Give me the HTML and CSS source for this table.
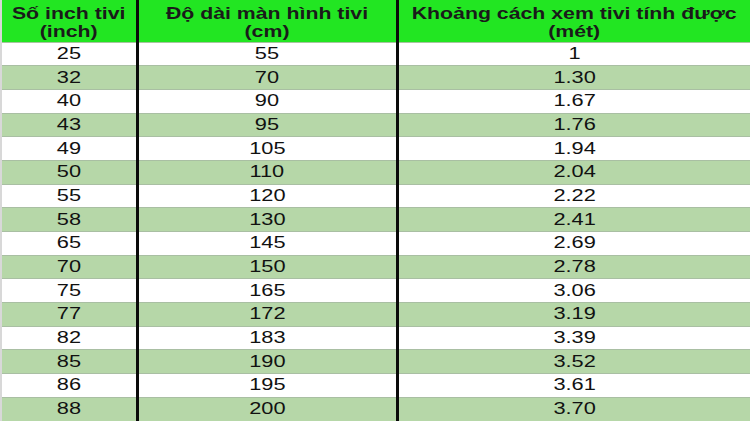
FILE: index.html
```html
<!DOCTYPE html>
<html lang="vi">
<head>
<meta charset="utf-8">
<link rel="stylesheet" href="styles.css">
</head>
<body>
<table class="tv">
<colgroup><col class="c1"><col class="c2"><col class="c3"></colgroup>
<thead>
<tr><th><span class="s">Số inch tivi<br>(inch)</span></th><th><span class="s">Độ dài màn hình tivi<br>(cm)</span></th><th><span class="s">Khoảng cách xem tivi tính được<br>(mét)</span></th></tr>
</thead>
<tbody>
<tr><td><span class="s">25</span></td><td><span class="s">55</span></td><td><span class="s">1</span></td></tr>
<tr class="g"><td><span class="s">32</span></td><td><span class="s">70</span></td><td><span class="s">1.30</span></td></tr>
<tr><td><span class="s">40</span></td><td><span class="s">90</span></td><td><span class="s">1.67</span></td></tr>
<tr class="g"><td><span class="s">43</span></td><td><span class="s">95</span></td><td><span class="s">1.76</span></td></tr>
<tr><td><span class="s">49</span></td><td><span class="s">105</span></td><td><span class="s">1.94</span></td></tr>
<tr class="g"><td><span class="s">50</span></td><td><span class="s">110</span></td><td><span class="s">2.04</span></td></tr>
<tr><td><span class="s">55</span></td><td><span class="s">120</span></td><td><span class="s">2.22</span></td></tr>
<tr class="g"><td><span class="s">58</span></td><td><span class="s">130</span></td><td><span class="s">2.41</span></td></tr>
<tr><td><span class="s">65</span></td><td><span class="s">145</span></td><td><span class="s">2.69</span></td></tr>
<tr class="g"><td><span class="s">70</span></td><td><span class="s">150</span></td><td><span class="s">2.78</span></td></tr>
<tr><td><span class="s">75</span></td><td><span class="s">165</span></td><td><span class="s">3.06</span></td></tr>
<tr class="g"><td><span class="s">77</span></td><td><span class="s">172</span></td><td><span class="s">3.19</span></td></tr>
<tr><td><span class="s">82</span></td><td><span class="s">183</span></td><td><span class="s">3.39</span></td></tr>
<tr class="g"><td><span class="s">85</span></td><td><span class="s">190</span></td><td><span class="s">3.52</span></td></tr>
<tr><td><span class="s">86</span></td><td><span class="s">195</span></td><td><span class="s">3.61</span></td></tr>
<tr class="g"><td><span class="s">88</span></td><td><span class="s">200</span></td><td><span class="s">3.70</span></td></tr>
</tbody>
</table>
</body>
</html>
```
FILE: styles.css
```css
html, body { margin: 0; padding: 0; background: #fff; }
body { width: 750px; height: 421px; overflow: hidden; }
.tv {
  width: 750px;
  border-collapse: collapse;
  table-layout: fixed;
  font-family: "Liberation Sans", Arial, sans-serif;
  color: #111;
  border-left: 2px solid #d8d8d8;
  border-right: 2px solid #d0d0d0;
}
.c1 { width: 136px; }
.c2 { width: 260px; }
.c3 { width: 354px; }
.s { display: inline-block; transform: scaleX(1.36); white-space: nowrap; }
.tv th {
  background: #22e622;
  font-size: 16px;
  font-weight: bold;
  line-height: 18px;
  height: 42px;
  padding: 4px 0 0;
  box-sizing: border-box;
  text-align: center;
  color: #1a1a1a;
  border-bottom: 1px solid #a8c4a0;
}
.tv th .s { transform: scaleX(1.33); }
.tv td {
  height: 22.7px;
  padding: 0;
  font-size: 16px;
  line-height: 18px;
  text-align: center;
  border-bottom: 1px solid #a9bfa3;
}
.tv tr.g td { background: #b6d7a8; }
.tv th:nth-child(1), .tv td:nth-child(1),
.tv th:nth-child(2), .tv td:nth-child(2) { border-right: 3px solid #0a0a0a; }
```
